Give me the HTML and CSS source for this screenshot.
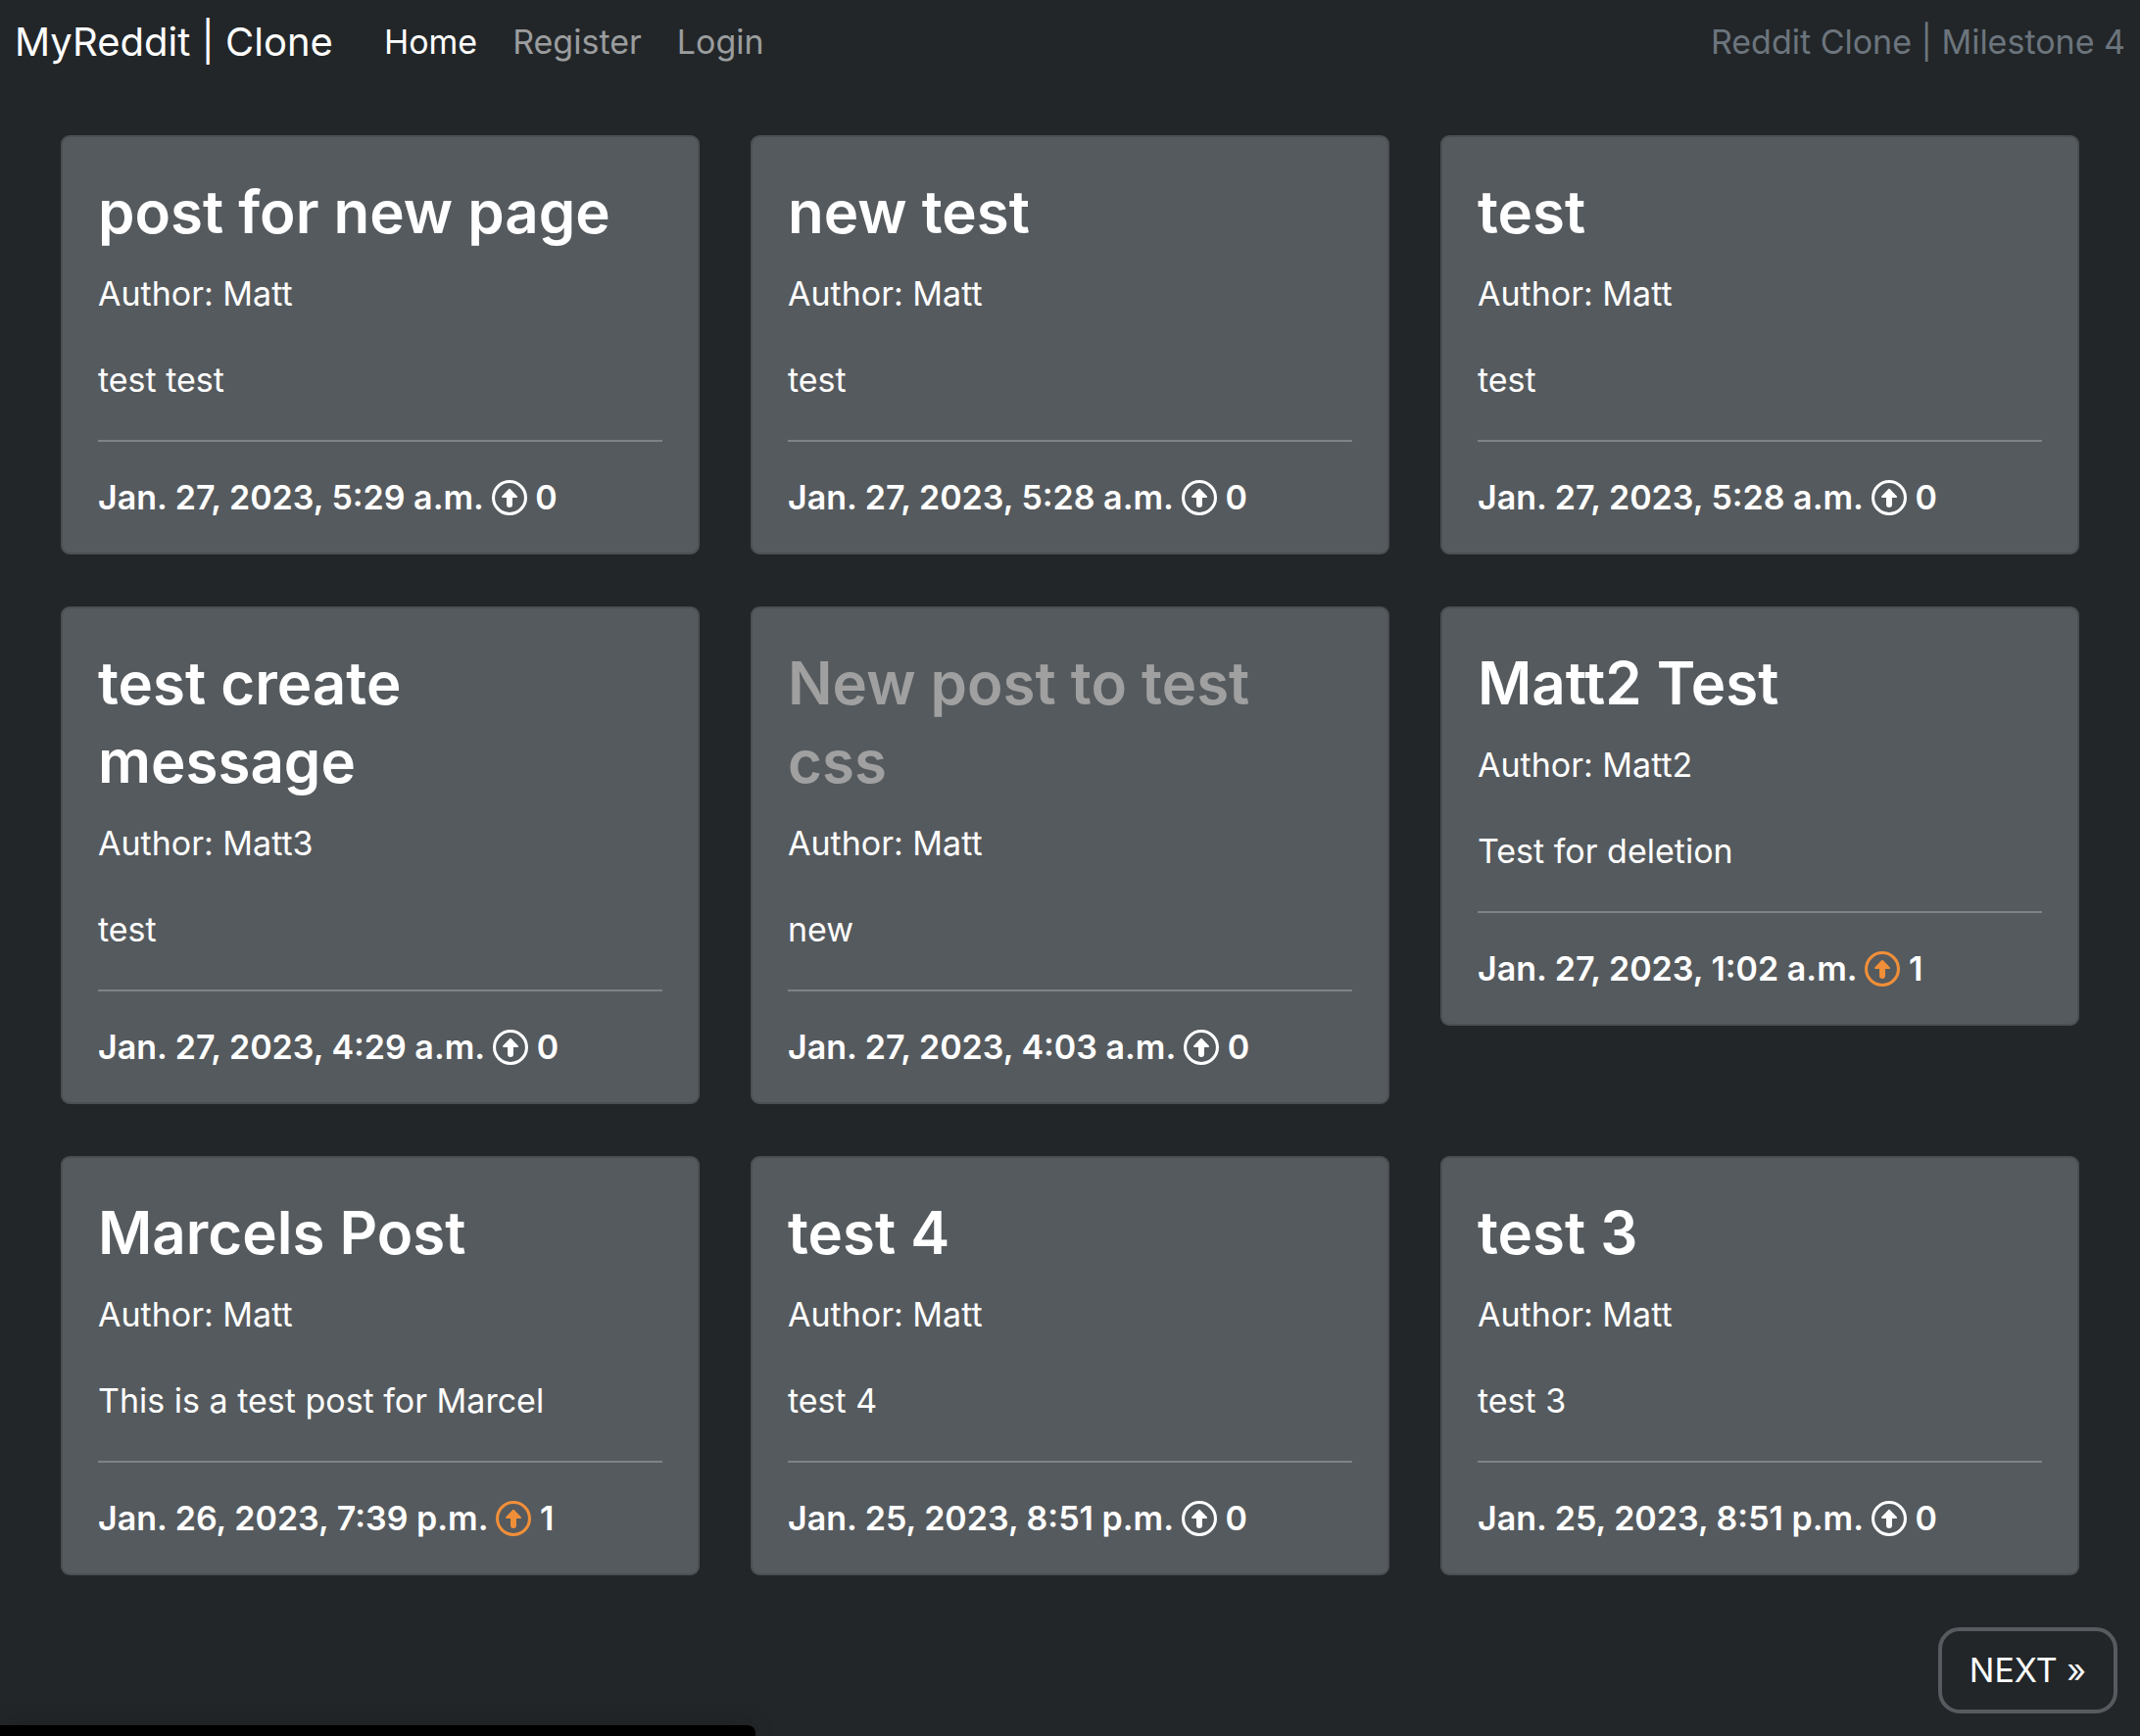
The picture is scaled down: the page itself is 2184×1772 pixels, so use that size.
FILE: index.html
```html
<!DOCTYPE html>
<html lang="en">
<head>
<meta charset="utf-8">
<meta name="viewport" content="width=device-width, initial-scale=1">
<title>MyReddit | Clone</title>
<link rel="stylesheet" href="styles.css">
</head>
<body>
<svg class="sprite" aria-hidden="true">
  <symbol id="upvote" viewBox="0 0 35 35">
    <circle cx="17.5" cy="17.5" r="16" fill="none" stroke="currentColor" stroke-width="3"/>
    <path d="M17.5 9.4 L24.5 16.6 H19.6 V24.4 a2.1 2.1 0 0 1 -4.2 0 V16.6 H10.5 Z" fill="currentColor" stroke="currentColor" stroke-width="1.6" stroke-linejoin="round"/>
  </symbol>
</svg>
<header class="navbar">
  <a class="brand" href="#">MyReddit | Clone</a>
  <nav class="nav-links">
    <a class="nav-link active" href="#">Home</a>
    <a class="nav-link" href="#">Register</a>
    <a class="nav-link" href="#">Login</a>
  </nav>
  <span class="tagline">Reddit Clone | Milestone 4</span>
</header>
<main class="posts">
  <article class="card">
    <h2 class="title"><a href="#">post for new page</a></h2>
    <p class="author">Author: Matt</p>
    <p class="excerpt">test test</p>
    <hr class="rule">
    <p class="meta">Jan. 27, 2023, 5:29 a.m. <svg class="vote"><use href="#upvote"/></svg> 0</p>
  </article>
  <article class="card">
    <h2 class="title"><a href="#">new test</a></h2>
    <p class="author">Author: Matt</p>
    <p class="excerpt">test</p>
    <hr class="rule">
    <p class="meta">Jan. 27, 2023, 5:28 a.m. <svg class="vote"><use href="#upvote"/></svg> 0</p>
  </article>
  <article class="card">
    <h2 class="title"><a href="#">test</a></h2>
    <p class="author">Author: Matt</p>
    <p class="excerpt">test</p>
    <hr class="rule">
    <p class="meta">Jan. 27, 2023, 5:28 a.m. <svg class="vote"><use href="#upvote"/></svg> 0</p>
  </article>
  <article class="card">
    <h2 class="title"><a href="#">test create message</a></h2>
    <p class="author">Author: Matt3</p>
    <p class="excerpt">test</p>
    <hr class="rule">
    <p class="meta">Jan. 27, 2023, 4:29 a.m. <svg class="vote"><use href="#upvote"/></svg> 0</p>
  </article>
  <article class="card">
    <h2 class="title"><a class="hovered" href="#">New post to test css</a></h2>
    <p class="author">Author: Matt</p>
    <p class="excerpt">new</p>
    <hr class="rule">
    <p class="meta">Jan. 27, 2023, 4:03 a.m. <svg class="vote"><use href="#upvote"/></svg> 0</p>
  </article>
  <article class="card">
    <h2 class="title"><a href="#">Matt2 Test</a></h2>
    <p class="author">Author: Matt2</p>
    <p class="excerpt">Test for deletion</p>
    <hr class="rule">
    <p class="meta">Jan. 27, 2023, 1:02 a.m. <svg class="vote voted"><use href="#upvote"/></svg> 1</p>
  </article>
  <article class="card">
    <h2 class="title"><a href="#">Marcels Post</a></h2>
    <p class="author">Author: Matt</p>
    <p class="excerpt">This is a test post for Marcel</p>
    <hr class="rule">
    <p class="meta">Jan. 26, 2023, 7:39 p.m. <svg class="vote voted"><use href="#upvote"/></svg> 1</p>
  </article>
  <article class="card">
    <h2 class="title"><a href="#">test 4</a></h2>
    <p class="author">Author: Matt</p>
    <p class="excerpt">test 4</p>
    <hr class="rule">
    <p class="meta">Jan. 25, 2023, 8:51 p.m. <svg class="vote"><use href="#upvote"/></svg> 0</p>
  </article>
  <article class="card">
    <h2 class="title"><a href="#">test 3</a></h2>
    <p class="author">Author: Matt</p>
    <p class="excerpt">test 3</p>
    <hr class="rule">
    <p class="meta">Jan. 25, 2023, 8:51 p.m. <svg class="vote"><use href="#upvote"/></svg> 0</p>
  </article>
</main>
<nav class="pagination">
  <a class="next" href="#">NEXT »</a>
</nav>
<div class="status-bar"></div>
</body>
</html>
```
FILE: styles.css
```css
* {
  box-sizing: border-box;
}

body {
  margin: 0;
  background: #222629;
  color: #fff;
  font-family: Inter, "Liberation Sans", sans-serif;
  font-size: 34px;
  line-height: 52px;
}

a {
  color: inherit;
  text-decoration: none;
}

h2,
p {
  margin: 0;
}

.sprite {
  display: none;
}

.navbar {
  display: flex;
  align-items: center;
  height: 86px;
  padding: 0 15px;
  background: #222629;
}

.brand {
  font-size: 40px;
  margin-right: 52px;
}

.nav-links {
  display: flex;
  gap: 36px;
}

.nav-link {
  color: #9b9d9e;
}

.nav-link.active {
  color: #fff;
}

.tagline {
  margin-left: auto;
  color: #6c757d;
}

.posts {
  display: grid;
  grid-template-columns: repeat(3, 1fr);
  align-items: start;
  gap: 53px 52px;
  padding: 52px 62px 53px;
}

.card {
  padding: 36px 36px 35px;
  background: #555a5e;
  border: 2px solid #4b4f52;
  border-radius: 9px;
}

.title {
  font-size: 60px;
  font-weight: 600;
  line-height: 80px;
  margin-bottom: 18px;
}

.hovered {
  color: #a0a0a0;
}

.excerpt {
  margin: 36px 0 35px;
}

.rule {
  height: 2px;
  margin: 0 0 36px;
  border: 0;
  background: #7f8386;
}

.meta {
  font-weight: 600;
  line-height: 42px;
}

.vote {
  width: 36px;
  height: 36px;
  vertical-align: -6px;
}

.voted {
  color: #f18f39;
}

.pagination {
  display: flex;
  justify-content: flex-end;
  padding: 0 23px 24px;
}

.next {
  padding: 14px 28px;
  border: 4px solid #575b5f;
  border-radius: 22px;
}

.status-bar {
  position: fixed;
  left: 0;
  bottom: 0;
  width: 771px;
  height: 11px;
  background: #000;
  border-top-right-radius: 8px;
  box-shadow: 0 0 24px rgba(0, 0, 0, 0.2);
}
```
